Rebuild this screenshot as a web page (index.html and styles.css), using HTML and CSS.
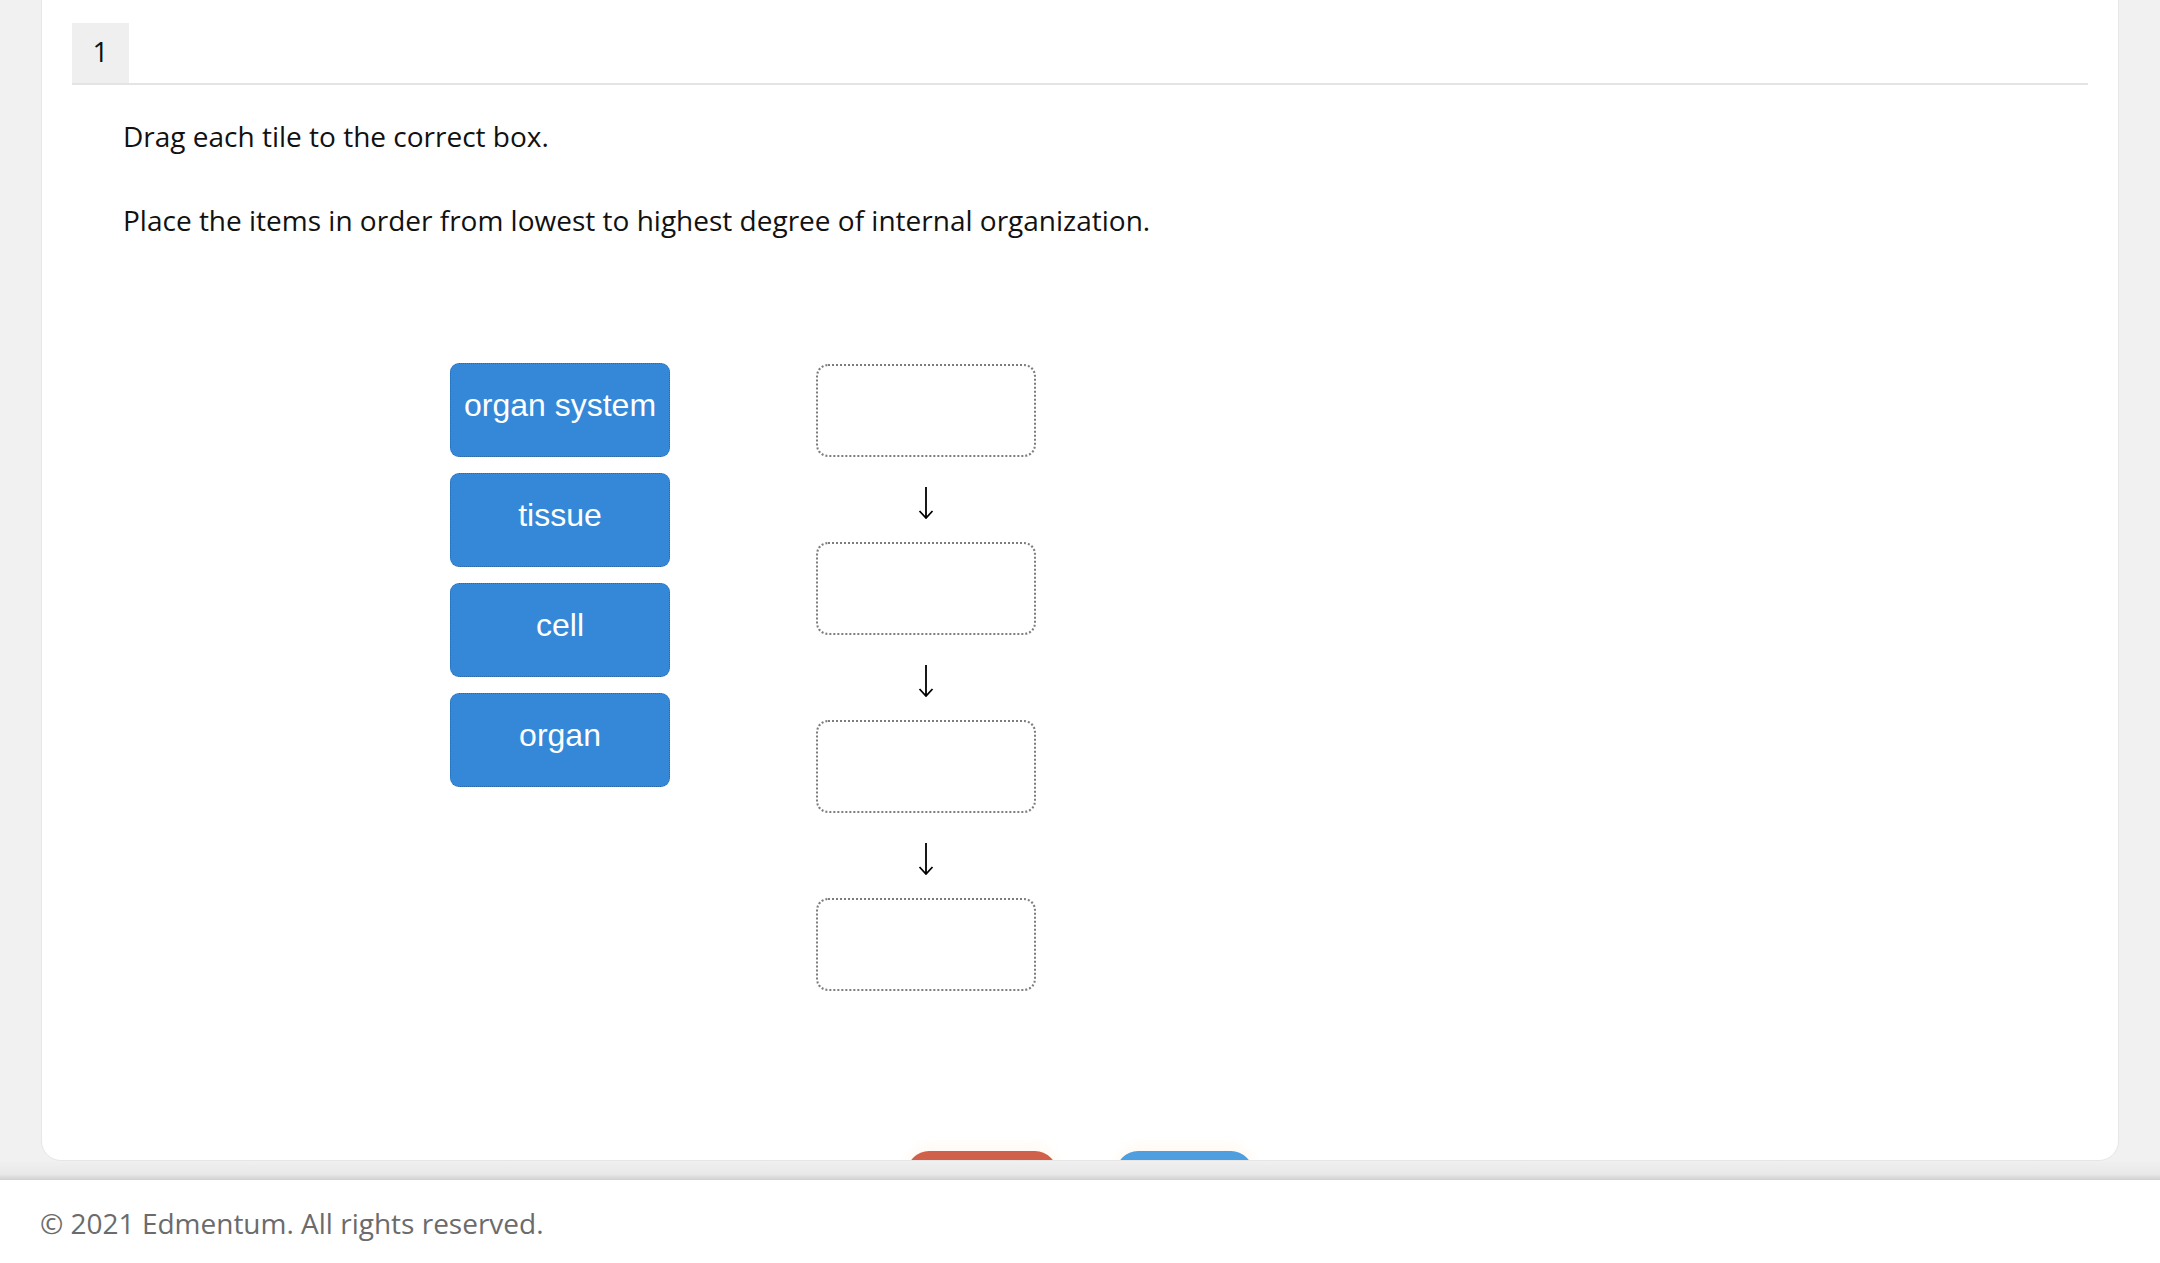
FILE: index.html
```html
<!DOCTYPE html>
<html>

<head>
   <title>Edmentum - Question 1</title>
   <link rel="stylesheet" href="styles.css">
</head>

<body>
   <div class="main">
      <div class="card">
         <div class="q-header">
            <div class="q-num">1</div>
         </div>

         <div class="instructions">
            <p>Drag each tile to the correct box.</p>
            <p>Place the items in order from lowest to highest degree of internal organization.</p>
         </div>

         <div class="dnd">
            <div class="tiles">
               <div class="tile">organ system</div>
               <div class="tile">tissue</div>
               <div class="tile">cell</div>
               <div class="tile">organ</div>
            </div>

            <div class="targets">
               <div class="drop-box"></div>
               <div class="arrow">
                  <svg width="16" height="32" viewBox="0 0 16 32">
                     <path d="M8 0 V31 M1.5 24 L8 31 L14.5 24" fill="none" stroke="#000" stroke-width="1.8" />
                  </svg>
               </div>
               <div class="drop-box"></div>
               <div class="arrow">
                  <svg width="16" height="32" viewBox="0 0 16 32">
                     <path d="M8 0 V31 M1.5 24 L8 31 L14.5 24" fill="none" stroke="#000" stroke-width="1.8" />
                  </svg>
               </div>
               <div class="drop-box"></div>
               <div class="arrow">
                  <svg width="16" height="32" viewBox="0 0 16 32">
                     <path d="M8 0 V31 M1.5 24 L8 31 L14.5 24" fill="none" stroke="#000" stroke-width="1.8" />
                  </svg>
               </div>
               <div class="drop-box"></div>
            </div>
         </div>

         <!-- buttons sit below the fold, only their tops show -->
         <div class="actions">
            <button class="btn btn-reset"></button>
            <button class="btn btn-next"></button>
         </div>
      </div>
   </div>

   <div class="footer">
      <div class="footer-shadow"></div>
      <div class="footer-text">&copy; 2021 Edmentum. All rights reserved.</div>
   </div>
</body>

</html>
```

FILE: styles.css
```css
html,
body {
   height: 100%;
}

body {
   margin: 0;
   display: flex;
   flex-direction: column;
   background-color: #f1f1f1;
   font-family: 'Open Sans', Arial, sans-serif;
   color: #111;
}

.main {
   flex: 1;
   min-height: 0;
   overflow: hidden;
   padding: 0 41px;
}

.card {
   box-sizing: border-box;
   height: calc(100% + 20px);
   margin-top: -20px;
   padding: 42px 30px 0;
   background-color: #fff;
   border: 1px solid #e6e6e6;
   border-radius: 20px;
   overflow: hidden;
}

.q-header {
   display: flex;
   border-bottom: 2px solid #e4e4e4;
}

.q-num {
   width: 57px;
   height: 60px;
   background-color: #efefef;
   font-size: 28px;
   line-height: 56px;
   text-align: center;
}

.instructions {
   padding: 31px 0 0 51px;
}

.instructions p {
   margin: 0 0 44px;
   font-size: 28px;
   line-height: 40px;
}

.instructions p:last-child {
   margin-bottom: 0;
}

.dnd {
   display: flex;
   align-items: flex-start;
   gap: 146px;
   padding: 123px 0 0 378px;
}

.tiles {
   display: flex;
   flex-direction: column;
   gap: 16px;
}

.tile {
   box-sizing: border-box;
   width: 220px;
   height: 94px;
   padding-top: 23px;
   background-color: #3588d8;
   border: 1px dotted #2a68a8;
   border-radius: 9px;
   color: #fff;
   font-family: 'Liberation Sans', Arial, sans-serif;
   font-size: 32px;
   line-height: 36px;
   text-align: center;
}

.targets {
   display: flex;
   flex-direction: column;
   align-items: center;
   padding-top: 1px;
}

.drop-box {
   box-sizing: border-box;
   width: 220px;
   height: 93px;
   border: 2px dotted #7d7d7d;
   border-radius: 12px;
}

.arrow {
   box-sizing: border-box;
   height: 85px;
   padding-top: 30px;
}

.arrow svg {
   display: block;
}

.actions {
   display: flex;
   justify-content: center;
   gap: 59px;
   margin-top: 160px;
}

.btn {
   height: 44px;
   padding: 0;
   border: none;
   border-radius: 22px;
   box-shadow: 0 -6px 10px rgba(255, 246, 236, 0.7);
}

.btn-reset {
   width: 150px;
   background-color: #d0604a;
}

.btn-next {
   width: 137px;
   background-color: #4f9fe0;
}

.footer {
   flex: none;
   background-color: #fff;
}

.footer-shadow {
   height: 19px;
   background: linear-gradient(#f0f0f0, #e8e8e8 70%, #d0d0d0);
}

.footer-text {
   height: 83px;
   padding-left: 40px;
   color: #6b6b6b;
   font-size: 28px;
   line-height: 86px;
}
```
